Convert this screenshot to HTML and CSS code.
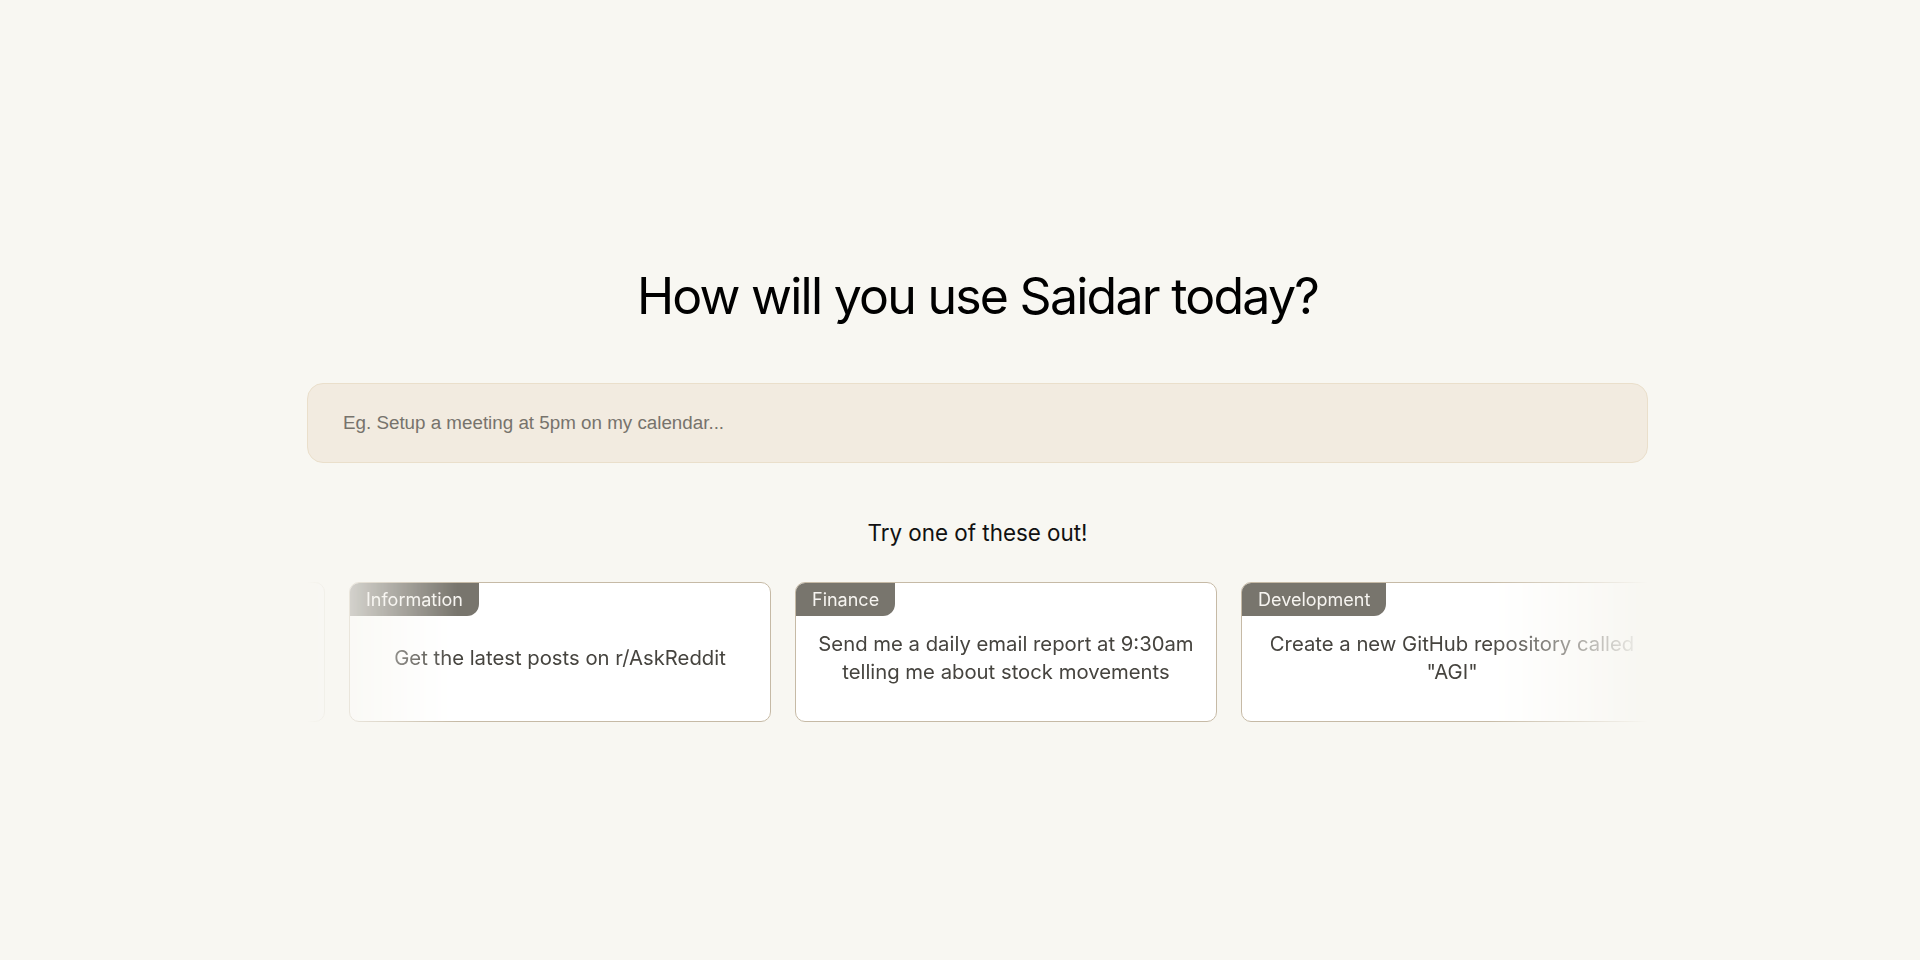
FILE: index.html
```html
<!DOCTYPE html>
<html>
<head>
  <title>Saidar</title>
  <link rel="stylesheet" href="styles.css">
</head>
<body>
  <main class="home">
    <h1 class="home-title">How will you use Saidar today?</h1>

    <form class="prompt-form" id="promptForm">
      <input class="prompt-input" id="prompt" type="text" placeholder="Eg. Setup a meeting at 5pm on my calendar...">
    </form>

    <p class="try-label">Try one of these out!</p>

    <!-- Suggestion carousel, faded at both ends -->
    <div class="carousel">
      <div class="carousel-track">
        <div class="card">
          <span class="card-tag">Productivity</span>
          <div class="card-body">Summarise my unread emails from today</div>
        </div>
        <div class="card">
          <span class="card-tag">Information</span>
          <div class="card-body">Get the latest posts on r/AskReddit</div>
        </div>
        <div class="card">
          <span class="card-tag">Finance</span>
          <div class="card-body">Send me a daily email report at 9:30am telling me about stock movements</div>
        </div>
        <div class="card">
          <span class="card-tag">Development</span>
          <div class="card-body">Create a new GitHub repository called "AGI"</div>
        </div>
        <div class="card">
          <span class="card-tag">Productivity</span>
          <div class="card-body">Summarise my unread emails from today</div>
        </div>
      </div>
    </div>
  </main>

  <script>
    document.getElementById('promptForm').addEventListener('submit', (e) => {
      e.preventDefault();
    });

    // Clicking a suggestion fills the prompt box
    document.querySelectorAll('.card').forEach((card) => {
      card.addEventListener('click', () => {
        document.getElementById('prompt').value = card.querySelector('.card-body').textContent;
      });
    });
  </script>
</body>
</html>
```

FILE: styles.css
```css
html, body {
  margin: 0;
  padding: 0;
  background: #f8f7f2;
}
body {
  font-family: Inter, "Noto Sans", sans-serif;
  color: #000;
  min-height: 960px;
}
.home {
  display: flex;
  flex-direction: column;
  align-items: center;
  padding: 266px 0 0 35px;
}
.home-title {
  margin: 0;
  font-size: 50px;
  line-height: 60px;
  font-weight: 400;
  letter-spacing: -1.75px;
  color: #000;
}

.prompt-form {
  width: 1341px;
  margin-top: 57px;
}
.prompt-input {
  width: 100%;
  height: 80px;
  box-sizing: border-box;
  padding: 0 35px;
  border: 1px solid #eadfcb;
  border-radius: 16px;
  background: #f2ebe0;
  font-family: "Liberation Sans", Arial, sans-serif;
  font-size: 18.8px;
  color: #333;
  outline: none;
}
.prompt-input::placeholder {
  color: #77736c;
}

.try-label {
  margin: 53px 0 0;
  font-size: 22.4px;
  line-height: 33px;
  color: #111;
}

.carousel {
  width: 1341px;
  margin-top: 33px;
  overflow: hidden;
  -webkit-mask-image: linear-gradient(to right, transparent 0, #000 150px, #000 calc(100% - 160px), transparent 100%);
  mask-image: linear-gradient(to right, transparent 0, #000 150px, #000 calc(100% - 160px), transparent 100%);
}
.carousel-track {
  display: flex;
  gap: 24px;
  transform: translateX(-404px);
}
.card {
  flex: 0 0 422px;
  height: 140px;
  box-sizing: border-box;
  display: flex;
  flex-direction: column;
  align-items: flex-start;
  background: #fff;
  border: 1.5px solid #c6baa6;
  border-radius: 10px;
  overflow: hidden;
  cursor: pointer;
}
.card-tag {
  height: 33px;
  line-height: 33px;
  padding: 0 16px 0 16px;
  background: #78756d;
  color: #f6f4f0;
  font-size: 18px;
  border-bottom-right-radius: 12px;
}
.card-body {
  flex: 1;
  align-self: stretch;
  display: flex;
  align-items: center;
  justify-content: center;
  padding: 0 20px 22px;
  text-align: center;
  font-size: 20.3px;
  line-height: 28px;
  color: #46443f;
}
```
